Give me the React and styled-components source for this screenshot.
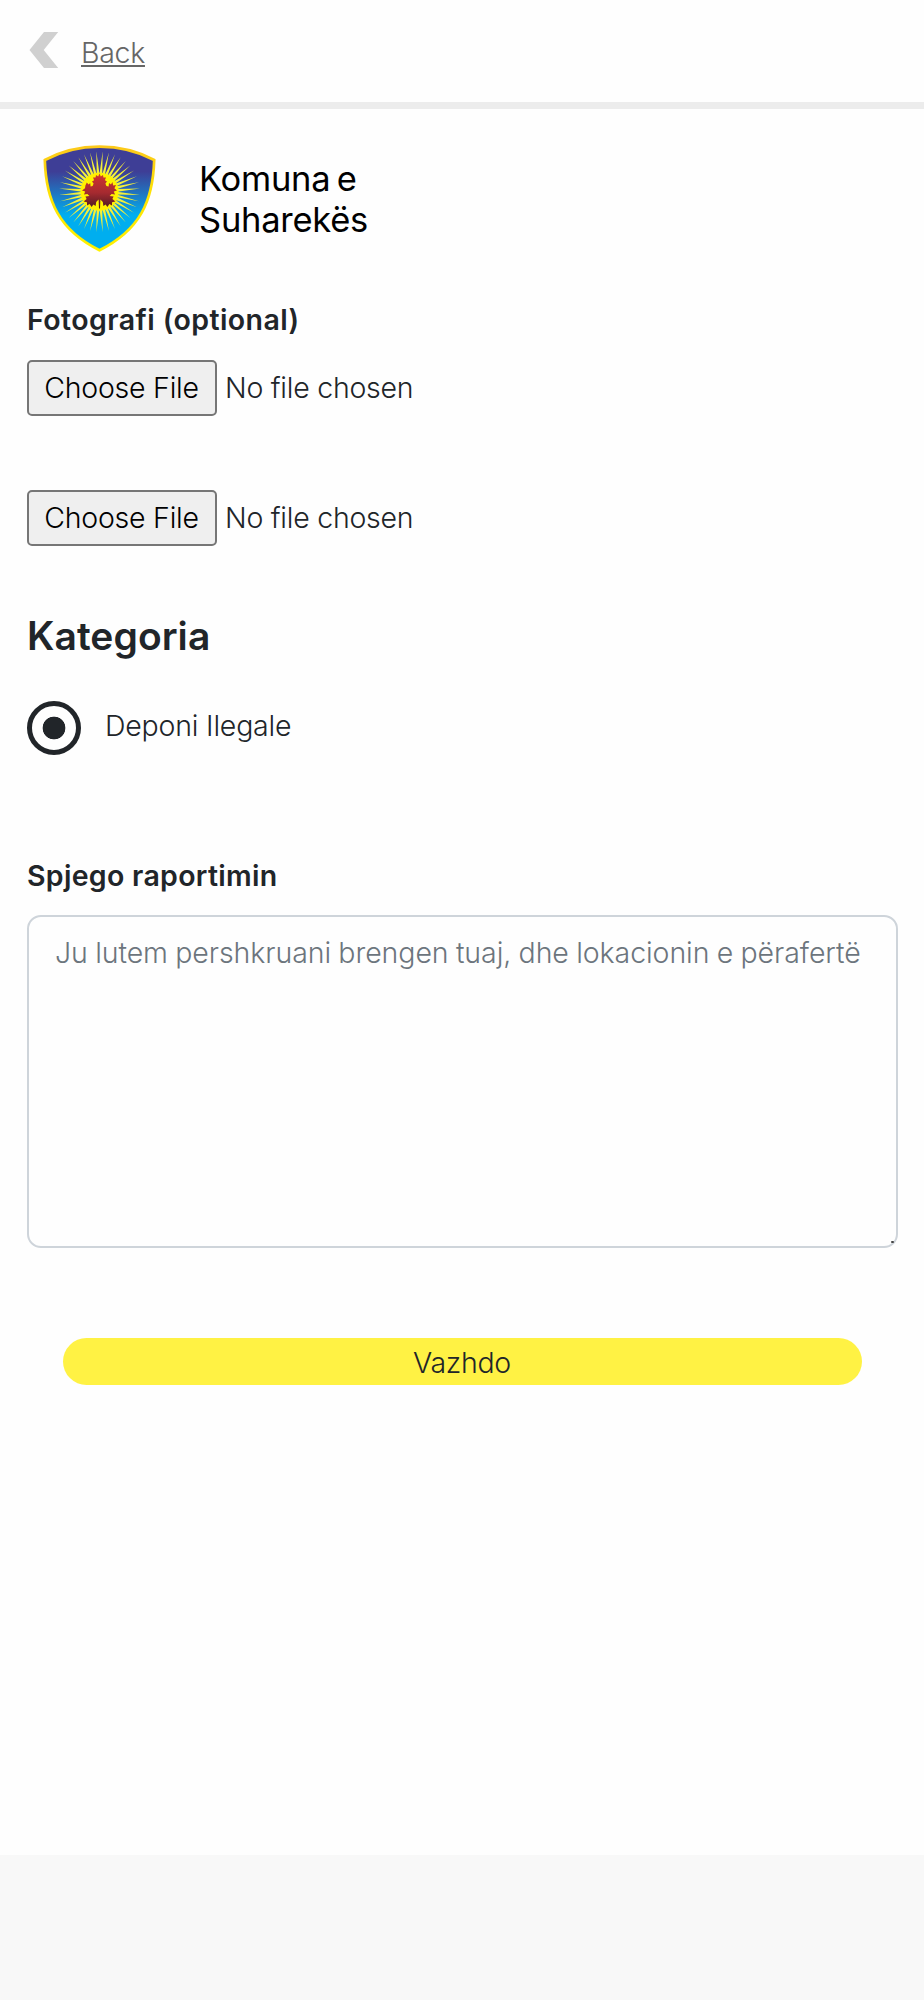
import React from "react";
import styled, { createGlobalStyle } from "styled-components";

const GlobalStyle = createGlobalStyle`
  *, *::before, *::after { box-sizing: border-box; }
  body {
    margin: 0;
    background: #f8f8f8;
    color: #212529;
    font-family: Inter, "Liberation Sans", sans-serif;
    font-size: 28.5px;
    font-weight: 300;
  }
`;

const Page = styled.div`
  height: 1855px;
  background: #fefefe;
`;

const Header = styled.header`
  display: flex;
  align-items: flex-start;
  gap: 22px;
  height: 109px;
  padding: 32px 29px 0;
  border-bottom: 7px solid #ececec;
`;

const BackLink = styled.a`
  margin-top: 4px;
  line-height: 34px;
  letter-spacing: -0.3px;
  color: #666;
  text-decoration: underline;
  text-decoration-thickness: 2px;
  text-underline-offset: 2px;
  text-decoration-skip-ink: none;
`;

const Brand = styled.div`
  display: flex;
  align-items: flex-start;
  gap: 42px;
  height: 143px;
  padding: 36px 43px 0;
`;

const BrandName = styled.h1`
  width: 190px;
  margin: 13px 0 0;
  font-size: 34.5px;
  font-weight: 400;
  line-height: 41px;
  letter-spacing: -0.25px;
  word-spacing: -3px;
  color: #000;
`;

const Form = styled.form`
  display: flex;
  flex-direction: column;
  padding: 0 26px 0 27px;
`;

const FieldTitle = styled.label`
  margin-top: ${(p) => p.$gap}px;
  line-height: 36px;
  font-weight: 600;
  letter-spacing: ${(p) => p.$tracking}px;
`;

const FileInput = styled.input`
  display: block;
  width: 520px;
  height: 56px;
  margin-top: ${(p) => p.$gap}px;
  padding: 0;
  font: inherit;
  letter-spacing: -0.25px;
  color: inherit;

  &::file-selector-button {
    height: 56px;
    width: 190px;
    margin: 0 8px 0 0;
    padding: 0 1px 1px 0;
    border: 2px solid #767676;
    border-radius: 5px;
    background: #efefef;
    color: #000;
    font: inherit;
    letter-spacing: -0.25px;
  }
`;

const SectionTitle = styled.h2`
  margin: 66px 0 0;
  font-size: 39px;
  font-weight: 600;
  line-height: 48px;
  letter-spacing: 0.05px;
`;

const RadioRow = styled.label`
  display: flex;
  align-items: flex-start;
  gap: 24px;
  margin-top: 41px;
`;

const Radio = styled.input`
  appearance: none;
  flex: none;
  width: 54px;
  height: 54px;
  margin: 0;
  border: 5px solid #212529;
  border-radius: 50%;

  &:checked {
    background: radial-gradient(circle, #212529 11px, transparent 11.7px);
  }
`;

const RadioText = styled.span`
  margin-top: 8px;
  line-height: 34px;
  letter-spacing: -0.2px;
`;

const TextBox = styled.div`
  position: relative;
  height: 333px;
  margin-top: 21px;
`;

const TextArea = styled.textarea`
  display: block;
  width: 100%;
  height: 100%;
  padding: 15px 20px 15px 26px;
  border: 2px solid #ced4da;
  border-radius: 14px;
  background: transparent;
  font: inherit;
  line-height: 42px;
  letter-spacing: -0.07px;
  word-spacing: -0.6px;
  resize: none;

  &::placeholder {
    color: #6c757d;
    opacity: 1;
  }
`;

const Grip = styled.span`
  position: absolute;
  right: 4px;
  bottom: 5px;
  width: 3px;
  height: 2px;
  border-radius: 1px;
  background: #444;
`;

const Submit = styled.button`
  height: 47px;
  margin: 90px 36px 0;
  padding: 1px 1px 0 0;
  border: 0;
  border-radius: 24px;
  background: #fff244;
  color: #212529;
  font: inherit;
  letter-spacing: -0.3px;
`;

const CX = 56.5;
const CY = 46.7;

const starPoints = (count, outer, inner) =>
  Array.from({ length: count * 2 }, (_, i) => {
    const r = i % 2 ? inner : outer;
    const a = (Math.PI * (i + 1)) / count;
    return `${(CX + r * Math.sin(a)).toFixed(2)},${(CY - r * Math.cos(a)).toFixed(2)}`;
  }).join(" ");

function Crest() {
  return (
    <svg width="114" height="108" viewBox="0 0 114 108" aria-hidden="true">
      <defs>
        <linearGradient id="sky" x1="0" y1="0" x2="0" y2="1">
          <stop offset="0.24" stopColor="#3e3e96" />
          <stop offset="0.38" stopColor="#2a62b2" />
          <stop offset="0.66" stopColor="#00aeef" />
        </linearGradient>
        <linearGradient id="rim" x1="0" y1="0" x2="0" y2="1">
          <stop offset="0" stopColor="#fcc91a" />
          <stop offset="0.4" stopColor="#fde006" />
          <stop offset="1" stopColor="#fff200" />
        </linearGradient>
        <linearGradient id="leaf" x1="0" y1="0" x2="0" y2="1">
          <stop offset="0" stopColor="#d2342f" />
          <stop offset="0.55" stopColor="#a52a30" />
          <stop offset="1" stopColor="#4a1a22" />
        </linearGradient>
      </defs>
      <path
        d="M1.8 15 Q27 1.7 56.5 1.7 Q86 1.7 111.2 15 C110 56 97 85 56.5 105.3 C16 85 3 56 1.8 15Z"
        fill="url(#sky)"
        stroke="url(#rim)"
        strokeWidth="2.7"
      />
      <polygon points={starPoints(40, 40.5, 17.5)} fill="#f3ef3a" />
      <circle cx={CX} cy={CY} r="19" fill="#fff200" />
      <path
        d="M56.5 28.6 L57.8 31.4 L60 30 L60.4 32.6 L63 32.6 L61.9 35.2 L64 36.6 L62.4 38.6 L63.4 41 L65.6 41.4 L66 38 L68 39.6 L69.4 37 L70.2 40.4 L73 40 L71.4 43.2 L74 45.4 L70.8 46.4 L72 49.4 L68.6 49 L66.6 51 L70.6 51.6 L69.4 54 L72.4 56.6 L69 57.2 L69 60.6 L66.4 59 L64.4 62 L62.6 59.6 L60.4 61 L59.8 57 L57.4 54.4 L57 63.5 L56 63.5 L55.6 54.4 L53.2 57 L52.6 61 L50.4 59.6 L48.6 62 L46.6 59 L44 60.6 L44 57.2 L40.6 56.6 L43.6 54 L42.4 51.6 L46.4 51 L44.4 49 L41 49.4 L42.2 46.4 L39 45.4 L42 43.2 L42.4 40.4 L43.8 37.6 L45.6 39.6 L47.2 38 L47.6 41.4 L49.6 41 L50.6 38.6 L49 36.6 L51.1 35.2 L50 32.6 L52.6 32.6 L53 30 L55.2 31.4Z"
        fill="url(#leaf)"
      />
    </svg>
  );
}

function Chevron() {
  return (
    <svg width="30" height="37" viewBox="0 0 30 37" aria-hidden="true">
      <path d="M29.2 0H15L0.5 18L15 36H29.2L14.7 18Z" fill="#d0d0d0" />
    </svg>
  );
}

export default function App() {
  return (
    <>
      <GlobalStyle />
      <Page>
        <Header>
          <Chevron />
          <BackLink href="#">Back</BackLink>
        </Header>
        <Brand>
          <Crest />
          <BrandName>Komuna e Suharekës</BrandName>
        </Brand>
        <Form onSubmit={(e) => e.preventDefault()}>
          <FieldTitle $gap={50} $tracking={0.42}>Fotografi (optional)</FieldTitle>
          <FileInput type="file" $gap={22} />
          <FileInput type="file" $gap={74} />
          <SectionTitle>Kategoria</SectionTitle>
          <RadioRow>
            <Radio type="radio" name="category" defaultChecked />
            <RadioText>Deponi Ilegale</RadioText>
          </RadioRow>
          <FieldTitle $gap={103} $tracking={0.3}>Spjego raportimin</FieldTitle>
          <TextBox>
            <TextArea placeholder="Ju lutem pershkruani brengen tuaj, dhe lokacionin e përafertë" />
            <Grip />
          </TextBox>
          <Submit type="submit">Vazhdo</Submit>
        </Form>
      </Page>
    </>
  );
}
